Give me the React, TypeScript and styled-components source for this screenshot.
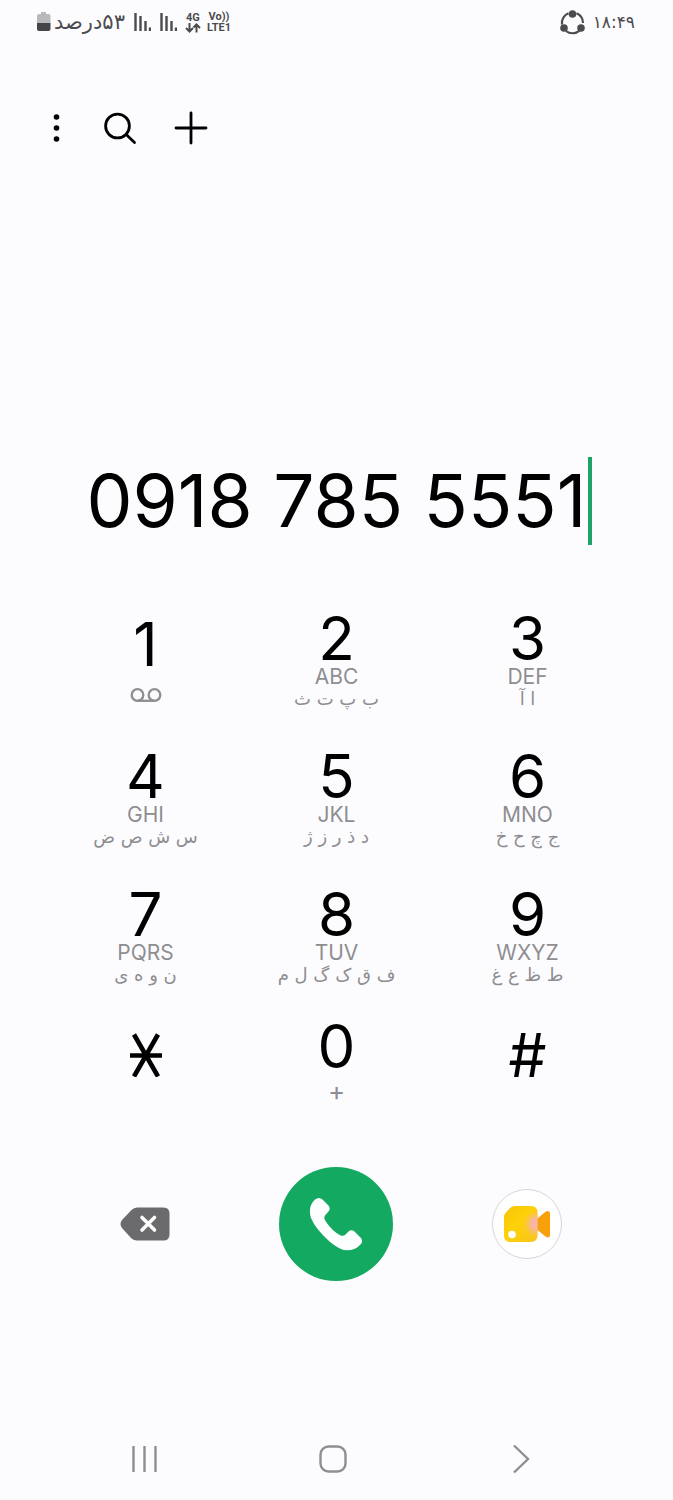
import React from 'react';
import styled, { createGlobalStyle } from 'styled-components';

const GlobalStyle = createGlobalStyle`
  *, *::before, *::after { box-sizing: border-box; }
  html, body { margin: 0; background: #fcfcff; }
  body { font-family: Inter, Roboto, "DejaVu Sans", sans-serif; color: #000; }
  svg { display: block; }
`;

const Screen = styled.main`
  min-height: 100vh;
  display: flex;
  flex-direction: column;
`;

const StatusBar = styled.header`
  display: flex;
  justify-content: space-between;
  height: 44px;
  padding: 0 38px 0 36px;
  color: #4c4c4f;
`;

const StatusGroup = styled.div<{ $gap: number }>`
  display: flex;
  align-items: center;
  gap: ${(p) => p.$gap}px;
`;

const StatusText = styled.span<{ $size: number }>`
  font-family: "DejaVu Sans", sans-serif;
  font-size: ${(p) => p.$size}px;
  line-height: 24px;
  white-space: nowrap;
`;

const NetworkLabel = styled.span`
  display: flex;
  flex-direction: column;
  align-items: center;
  font-family: Roboto, sans-serif;
  font-size: 11px;
  font-weight: 700;
  line-height: 11px;
`;

const Toolbar = styled.nav`
  display: flex;
  align-items: center;
  gap: 36px;
  height: 80px;
  margin-top: 44px;
  padding: 0 38px;
`;

const IconButton = styled.button`
  display: grid;
  place-items: center;
  padding: 0;
  border: 0;
  background: none;
  color: inherit;
  cursor: pointer;
`;

const NumberRow = styled.div`
  display: flex;
  align-items: center;
  justify-content: center;
  height: 90px;
  margin-top: 288px;
  padding-left: 6px;
`;

const NumberInput = styled.input`
  field-sizing: content;
  min-width: 0;
  height: 88px;
  padding: 0 2px 2px 0;
  border: 0;
  outline: 0;
  background: none;
  color: #000;
  font-family: inherit;
  font-size: 73px;
  line-height: 86px;
`;

const Caret = styled.span`
  width: 4px;
  height: 88px;
  background: #1fa267;
`;

const Keypad = styled.section`
  display: grid;
  grid-template-columns: repeat(3, 1fr);
  grid-template-rows: repeat(3, 138px) 110px;
  margin-top: 54px;
  padding: 0 50px;
`;

const Key = styled.button<{ $top: number }>`
  display: flex;
  flex-direction: column;
  align-items: center;
  padding: ${(p) => p.$top}px 0 0;
  border: 0;
  background: none;
  color: #000;
  font-family: inherit;
  cursor: pointer;
`;

const Digit = styled.span`
  display: grid;
  place-items: center;
  height: 56px;
  font-size: 60px;
  line-height: 56px;
`;

const Letters = styled.span`
  font-size: 21px;
  line-height: 22px;
  color: #8e8e91;
`;

const PersianLetters = styled.span`
  font-family: "DejaVu Sans", sans-serif;
  font-size: 18px;
  line-height: 22px;
  color: #8e8e91;
  white-space: nowrap;
`;

const Voicemail = styled.span`
  margin-top: 16px;
  color: #8e8e91;
`;

const PlusLabel = styled.span`
  margin-top: 5px;
  font-size: 26px;
  line-height: 24px;
  color: #8e8e91;
`;

const Actions = styled.section`
  display: grid;
  grid-template-columns: repeat(3, 1fr);
  place-items: center;
  margin-top: 43px;
  padding: 0 51px 0 50px;
`;

const CallButton = styled(IconButton)`
  width: 114px;
  height: 114px;
  border-radius: 50%;
  background: #14a960;
  color: #fcfffd;
`;

const VideoButton = styled(IconButton)`
  width: 70px;
  height: 70px;
  border: 1px solid #d6d6da;
  border-radius: 50%;
  background: #fff;
`;

const SystemNav = styled.nav`
  display: grid;
  grid-template-columns: repeat(3, 1fr);
  place-items: center;
  height: 82px;
  margin-top: auto;
  padding: 0 58px 0 51px;
  color: #8f8f92;
`;

type KeyData = { digit: string; latin?: string; persian?: string };

const KEYS: KeyData[] = [
  { digit: '1' },
  { digit: '2', latin: 'ABC', persian: 'ب پ ت ث' },
  { digit: '3', latin: 'DEF', persian: 'ا آ' },
  { digit: '4', latin: 'GHI', persian: 'س ش ص ض' },
  { digit: '5', latin: 'JKL', persian: 'د ذ ر ز ژ' },
  { digit: '6', latin: 'MNO', persian: 'ج چ ح خ' },
  { digit: '7', latin: 'PQRS', persian: 'ن و ه ی' },
  { digit: '8', latin: 'TUV', persian: 'ف ق ک گ ل م' },
  { digit: '9', latin: 'WXYZ', persian: 'ط ظ ع غ' },
];

const BatteryIcon = () => (
  <svg width="15" height="20" viewBox="0 0 15 20">
    <path d="M5 0h5v2h2.500q2 0 2 2v7H1V4q0-2 2-2h2z" fill="#b9b9bc" />
    <path d="M1 11h13.500v6q0 2-2 2H3q-2 0-2-2z" fill="#454548" />
  </svg>
);

const SignalIcon = () => (
  <svg width="18" height="20" viewBox="0 0 18 20" stroke="currentColor" strokeWidth="2.400">
    <path d="M2.500 1v18M7.500 4v15M12.500 9v10M17 15.500v3.500" />
  </svg>
);

const DataArrowsIcon = () => (
  <svg width="16" height="10" viewBox="0 0 16 10" fill="none" stroke="currentColor" strokeWidth="2">
    <path d="M4.500 0v8M1 5l3.500 3.500L8 5M11.500 9.500v-8M8.500 4.500L11.500 1.500l3.500 3.500" />
  </svg>
);

const ShareRingIcon = () => (
  <svg width="25" height="25" viewBox="0 0 25 25">
    <g fill="none" stroke="currentColor" strokeWidth="2.200">
      <path d="M2 14.500A10.500 10.500 0 0 1 8.500 3.200M16.500 3.200A10.500 10.500 0 0 1 23 13M19.500 20.600A10.500 10.500 0 0 1 6 21" />
    </g>
    <g fill="currentColor">
      <circle cx="12.500" cy="4" r="3.800" />
      <circle cx="4" cy="18" r="3.800" />
      <circle cx="21" cy="18" r="3.800" />
    </g>
  </svg>
);

const MoreIcon = () => (
  <svg width="30" height="36" viewBox="0 0 30 36">
    <circle cx="18.500" cy="7" r="2.800" />
    <circle cx="18.500" cy="18" r="2.800" />
    <circle cx="18.500" cy="29" r="2.800" />
  </svg>
);

const SearchIcon = () => (
  <svg width="34" height="36" viewBox="0 0 34 36" fill="none" stroke="#000" strokeWidth="2.800" strokeLinecap="round">
    <circle cx="13.500" cy="16" r="11.900" />
    <path d="M22.200 24.500L30.500 32.500" />
  </svg>
);

const AddIcon = () => (
  <svg width="34" height="36" viewBox="0 0 34 36" fill="none" stroke="#000" strokeWidth="2.800" strokeLinecap="round">
    <path d="M17 3v30M2 18h30" />
  </svg>
);

const VoicemailIcon = () => (
  <svg width="32" height="14" viewBox="0 0 32 14" fill="none" stroke="currentColor" strokeWidth="2.300">
    <circle cx="7.500" cy="7" r="5.800" />
    <circle cx="24.500" cy="7" r="5.800" />
    <path d="M7.500 12.800h17" />
  </svg>
);

const StarIcon = () => (
  <svg width="34" height="44" viewBox="0 0 34 44" fill="none" stroke="#000" strokeWidth="4.600">
    <path d="M1 22.500h32M5 1.500L29 43.500M29 1.500L5 43.500" />
  </svg>
);

const DeleteIcon = () => (
  <svg width="50" height="34" viewBox="0 0 50 34">
    <path d="M17 .5H43.500Q49.500 .5 49.500 6.500V27.500Q49.500 33.500 43.500 33.500H17Q14 33.500 11.500 31.500L2 21Q-1 17 2 13L11.500 3Q14 .5 17 .5Z" fill="#6b6b6d" />
    <path d="M22 10.500L34.500 23M34.500 10.500L22 23" stroke="#fff" strokeWidth="3.600" strokeLinecap="round" />
  </svg>
);

const PhoneIcon = () => (
  <svg width="54" height="54" viewBox="0 0 54 54" fill="currentColor">
    <path d="M6 2.500Q10 -.5 13.500 2.500L19.500 8.500Q22 11.500 19.500 14.500L16 18.500Q14.500 21 16.500 24Q23 34 31.500 38.500Q34.500 39.500 36.500 37.500L39.500 34.500Q42.500 32 45.500 34.500L51.500 40.500Q54.500 43.500 52 47Q46.500 53.500 37.500 53.300Q30.500 53 20.500 44.500Q6.500 32 2 21Q-1.500 9.500 6 2.500Z" />
  </svg>
);

const VideoIcon = () => (
  <svg width="48" height="38" viewBox="0 0 48 38">
    <defs>
      <linearGradient id="videoBody" x1="0" y1="0" x2="1" y2="1">
        <stop offset="0" stopColor="#f4c20a" />
        <stop offset=".4" stopColor="#fdd108" />
        <stop offset="1" stopColor="#f8c51c" />
      </linearGradient>
      <radialGradient id="videoGlow" gradientUnits="userSpaceOnUse" cx="34" cy="19" r="15">
        <stop offset="0" stopColor="#f9b3bc" />
        <stop offset=".4" stopColor="#f9b4a8" stopOpacity=".9" />
        <stop offset="1" stopColor="#fbcb30" stopOpacity="0" />
      </radialGradient>
    </defs>
    <path d="M12 1H28Q34.500 1 34.500 7.500V30.500Q34.500 37 28 37H7.500Q1 37 1 30.500V12Q1 9.500 3 7.500L7 3Q9 1 12 1Z" fill="url(#videoBody)" />
    <path d="M12 1H28Q34.500 1 34.500 7.500V30.500Q34.500 37 28 37H7.500Q1 37 1 30.500V12Q1 9.500 3 7.500L7 3Q9 1 12 1Z" fill="url(#videoGlow)" />
    <path d="M34.500 13.500L42.500 6.800Q47 4.500 47 9V30Q47 34 42.500 31.500L34.500 25Z" fill="#f8a00c" />
    <circle cx="9" cy="29.500" r="3.800" fill="#fff" />
  </svg>
);

const RecentsIcon = () => (
  <svg width="28" height="28" viewBox="0 0 28 28" stroke="currentColor" strokeWidth="2.400">
    <path d="M2.500 1v26M13.500 1v26M24.500 1v26" />
  </svg>
);

const HomeIcon = () => (
  <svg width="28" height="28" viewBox="0 0 28 28" fill="none" stroke="currentColor" strokeWidth="2.400">
    <rect x="1.500" y="1.500" width="25" height="25" rx="8" />
  </svg>
);

const BackIcon = () => (
  <svg width="18" height="30" viewBox="0 0 18 30" fill="none" stroke="currentColor" strokeWidth="2.400">
    <path d="M2 1.500L16 15L2 28.500" />
  </svg>
);

export default function App() {
  return (
    <>
      <GlobalStyle />
      <Screen lang="fa">
        <StatusBar>
          <StatusGroup $gap={8}>
            <StatusGroup $gap={3}>
              <BatteryIcon />
              <StatusText $size={21} dir="rtl">۵۳درصد</StatusText>
            </StatusGroup>
            <SignalIcon />
            <SignalIcon />
            <StatusGroup $gap={6}>
              <NetworkLabel>
                4G
                <DataArrowsIcon />
              </NetworkLabel>
              <NetworkLabel>
                <span>Vo))</span>
                <span>LTE1</span>
              </NetworkLabel>
            </StatusGroup>
          </StatusGroup>
          <StatusGroup $gap={8}>
            <ShareRingIcon />
            <StatusText $size={17}>۱۸:۴۹</StatusText>
          </StatusGroup>
        </StatusBar>

        <Toolbar>
          <IconButton aria-label="More options"><MoreIcon /></IconButton>
          <IconButton aria-label="Search"><SearchIcon /></IconButton>
          <IconButton aria-label="Add to contacts"><AddIcon /></IconButton>
        </Toolbar>

        <NumberRow>
          <NumberInput aria-label="Phone number" type="tel" defaultValue="0918 785 5551" />
          <Caret />
        </NumberRow>

        <Keypad>
          {KEYS.map((k) => (
            <Key key={k.digit} $top={k.latin ? 10 : 16}>
              <Digit>{k.digit}</Digit>
              {k.latin && <Letters>{k.latin}</Letters>}
              {k.persian && <PersianLetters dir="rtl">{k.persian}</PersianLetters>}
              {!k.latin && <Voicemail><VoicemailIcon /></Voicemail>}
            </Key>
          ))}
          <Key $top={13} aria-label="*"><Digit><StarIcon /></Digit></Key>
          <Key $top={4}>
            <Digit>0</Digit>
            <PlusLabel>+</PlusLabel>
          </Key>
          <Key $top={13}><Digit>#</Digit></Key>
        </Keypad>

        <Actions>
          <IconButton aria-label="Delete"><DeleteIcon /></IconButton>
          <CallButton aria-label="Call"><PhoneIcon /></CallButton>
          <VideoButton aria-label="Video call"><VideoIcon /></VideoButton>
        </Actions>

        <SystemNav>
          <IconButton aria-label="Recents"><RecentsIcon /></IconButton>
          <IconButton aria-label="Home"><HomeIcon /></IconButton>
          <IconButton aria-label="Back"><BackIcon /></IconButton>
        </SystemNav>
      </Screen>
    </>
  );
}
